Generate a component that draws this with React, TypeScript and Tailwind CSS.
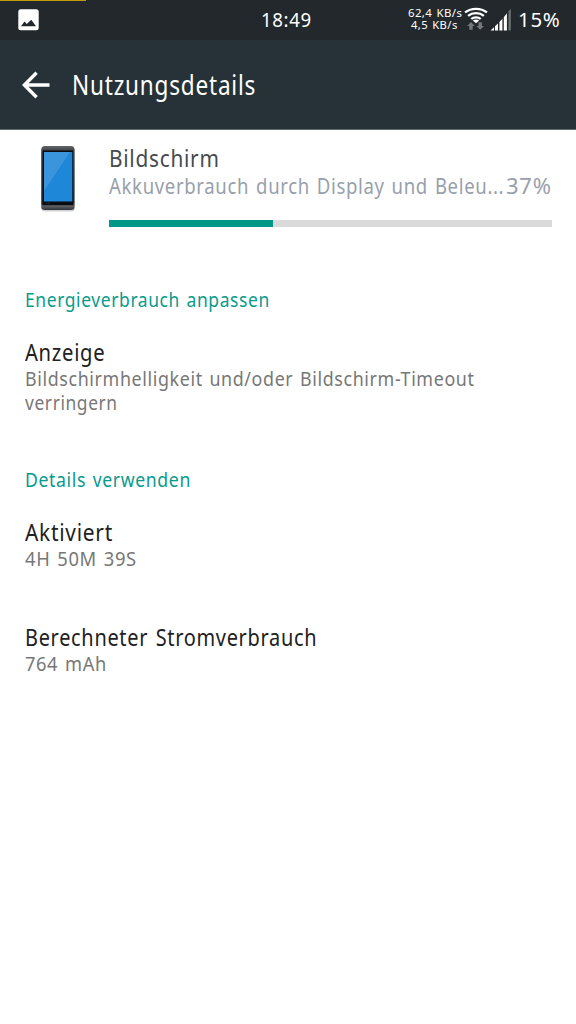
import React, { useLayoutEffect, useRef } from "react";

type LabelProps = {
  width: number;
  className?: string;
  children: React.ReactNode;
};

// Single line of text condensed to a fixed width
const Label: React.FC<LabelProps> = ({ width, className = "", children }) => {
  const ref = useRef<HTMLSpanElement>(null);

  useLayoutEffect(() => {
    const el = ref.current;
    if (!el) return;
    el.style.transform = `scaleX(${width / el.offsetWidth})`;
  }, [width]);

  return (
    <div className={`whitespace-nowrap ${className}`} style={{ width }}>
      <span ref={ref} className="inline-block origin-left tracking-[0.035em] [word-spacing:0.08em]">
        {children}
      </span>
    </div>
  );
};

const StatusBar: React.FC = () => (
  <div className="relative h-10 bg-[#22282b] text-white">
    <div className="absolute left-0 top-0 h-px w-[86px] bg-[#c39a0c]" />

    <svg className="absolute left-[18px] top-[9px]" width="21" height="22" viewBox="0 0 21 22">
      <rect x="0.3" y="0.3" width="20.4" height="21" rx="2.5" fill="#fff" />
      <path d="M3 17.2 6.5 12.6 8.8 15 13.3 10.7 18 17.2Z" fill="#22282b" />
    </svg>

    <Label width={51} className="absolute left-[261px] top-[7px] text-[19px] leading-[26px]">
      18:49
    </Label>

    <div className="absolute left-[408px] top-[7px] flex flex-col items-center text-[11px] leading-[12px]">
      <Label width={54}>62,4 KB/s</Label>
      <Label width={47} className="-ml-px">
        4,5 KB/s
      </Label>
    </div>

    {/* Wifi */}
    <svg className="absolute left-[464px] top-[7px]" width="24" height="24" viewBox="0 0 24 24" fill="none">
      <g stroke="#fff" strokeWidth="2.3">
        <path d="M1 5.4C7.2 0.6 16.8 0.6 23 5.4" />
        <path d="M4.1 8.8C8.4 5.2 15.6 5.2 19.9 8.8" />
        <path d="M7.3 12C9.8 9.7 14.2 9.7 16.7 12" />
      </g>
      <path d="M8.8 13.4C10.5 12.1 13.5 12.1 15.2 13.4L12 16.2Z" fill="#fff" />
      <path
        d="M7 15 10.8 19H8.7V22.8H5.3V19H3.2ZM16.2 22.8 12.4 19H14.5V15.2H17.9V19H20Z"
        fill="#74787a"
      />
    </svg>

    {/* Signal */}
    <svg className="absolute left-[490px] top-[8px]" width="22" height="23" viewBox="0 0 22 23">
      <path
        d="M0.5 22.5 4 19.2V22.5ZM5 18.3 8 15.4V22.5H5ZM9.4 14 12.4 10.8V22.5H9.4ZM13.8 9.3 16.9 5.2V22.5H13.8Z"
        fill="#fff"
      />
      <path d="M18.5 3.5 20.8 0.8V22.5H18.5Z" fill="#6d7173" />
    </svg>

    <Label width={43} className="absolute left-[518px] top-[7px] text-[19.5px] leading-[26px]">
      15%
    </Label>
  </div>
);

const PhoneIcon: React.FC = () => (
  <svg className="mt-px block" width="36" height="68" viewBox="0 0 36 68">
    <defs>
      <linearGradient id="body" x1="0" y1="0" x2="0" y2="1">
        <stop offset="0" stopColor="#63676b" />
        <stop offset="0.08" stopColor="#3b3e41" />
        <stop offset="0.9" stopColor="#25282b" />
        <stop offset="0.94" stopColor="#5b5f63" />
        <stop offset="1" stopColor="#303337" />
      </linearGradient>
    </defs>
    <rect x="1" y="2.5" width="34" height="64" rx="4" fill="#000" opacity="0.18" />
    <rect x="1.3" y="1" width="33.2" height="64" rx="3.5" fill="url(#body)" />
    <rect x="2.7" y="5.5" width="30.3" height="54.5" fill="#090d11" />
    <rect x="4" y="7" width="28.3" height="49.5" fill="#1f87d7" />
    <path d="M4 7H30L4 46Z" fill="#3b95dc" />
    <path d="M6 58.3H7.2M8.4 58.3H9.6" stroke="#454a4f" strokeWidth="0.8" />
  </svg>
);

const App: React.FC = () => {
  return (
    <div className="h-[1024px] w-[576px] overflow-hidden bg-white font-['Noto_Sans','Open_Sans',sans-serif]">
      <StatusBar />

      {/* Toolbar */}
      <header className="flex h-[90px] items-center border-b border-[#626b6f] bg-[#263238] pl-[22px] text-white">
        <svg width="28" height="28" viewBox="0 0 28 28" fill="none" stroke="#fff" strokeWidth="3.4">
          <path d="M27.5 14H3M14.6 1.7 2.4 14 14.6 26.3" />
        </svg>
        <Label width={184} className="ml-[22px] text-[26.5px] leading-[36px]">
          Nutzungsdetails
        </Label>
      </header>

      {/* Usage summary */}
      <section className="flex pl-10 pt-[14px]">
        <PhoneIcon />
        <div className="ml-[33px] w-[443px]">
          <Label width={111} className="text-[24px] leading-[28px] text-[#464b4e]">
            Bildschirm
          </Label>
          <div className="flex justify-between text-[21px] leading-[28px] text-[#989fac]">
            <Label width={395}>Akkuverbrauch durch Display und Beleu...</Label>
            <Label width={46}>37%</Label>
          </div>
          <div className="mt-5 h-[6.5px] bg-[#dadada]">
            <div className="h-full w-[37%] bg-[#009688]" />
          </div>
        </div>
      </section>

      <main className="pl-[25px] pt-[59px] text-[20px] leading-[24px] text-[#777]">
        <Label width={245} className="leading-[28px] text-[#089b8d]">
          Energieverbrauch anpassen
        </Label>

        <div className="mt-6">
          <Label width={80} className="mb-px text-[23.5px] leading-[28px] text-[#212121]">
            Anzeige
          </Label>
          <Label width={450}>Bildschirmhelligkeit und/oder Bildschirm-Timeout</Label>
          <Label width={93}>verringern</Label>
        </div>

        <Label width={166} className="mt-[51px] leading-[28px] text-[#089b8d]">
          Details verwenden
        </Label>

        <div className="mt-6">
          <Label width={88} className="mb-px text-[23.5px] leading-[28px] text-[#212121]">
            Aktiviert
          </Label>
          <Label width={112}>4H 50M 39S</Label>
        </div>

        <div className="mt-[52px]">
          <Label width={292} className="mb-px text-[23.5px] leading-[28px] text-[#212121]">
            Berechneter Stromverbrauch
          </Label>
          <Label width={82}>764 mAh</Label>
        </div>
      </main>
    </div>
  );
};

export default App;
